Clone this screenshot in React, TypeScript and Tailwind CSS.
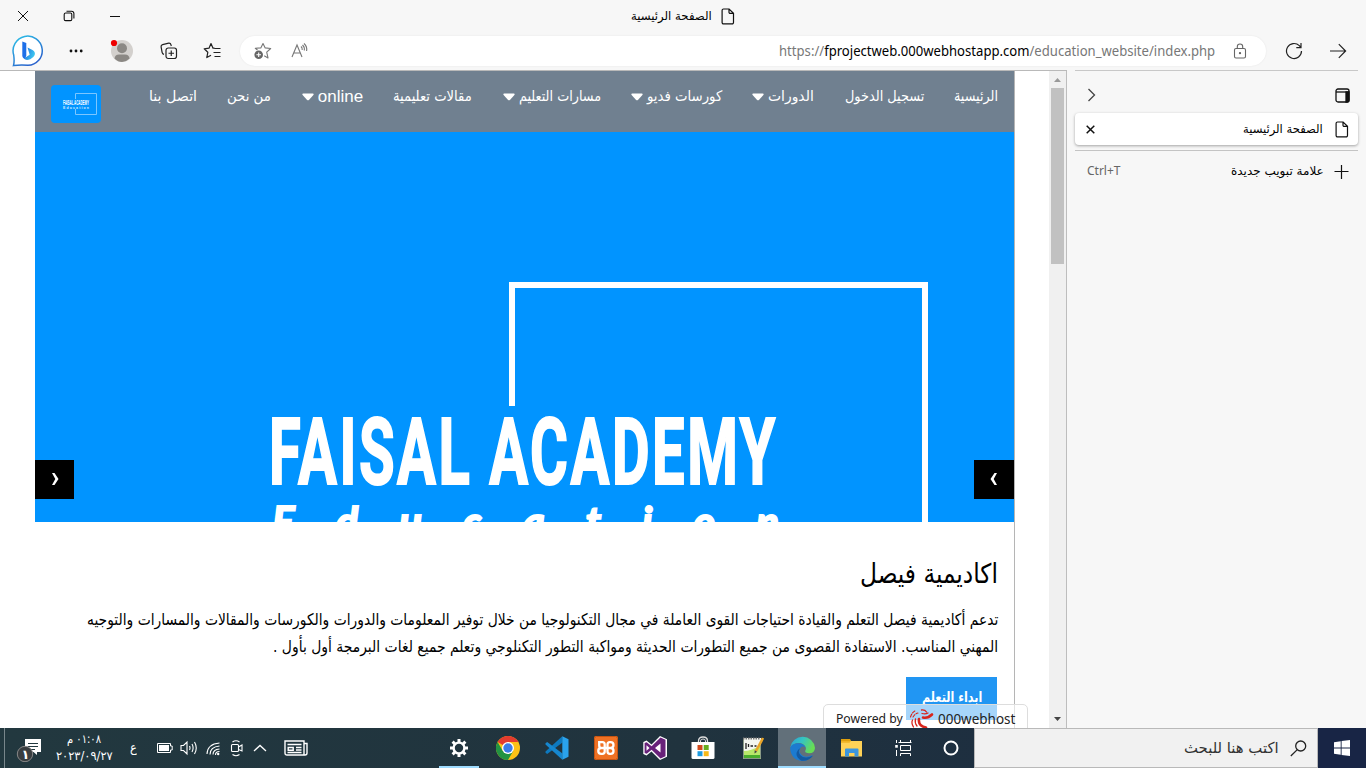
import { useLayoutEffect, useRef, useState } from 'react';
import type { ReactNode } from 'react';

/* Single line of text condensed or stretched to an exact width. */
function Fit({ w, dir = 'rtl', className = '', children }: { w: number; dir?: 'rtl' | 'ltr'; className?: string; children: ReactNode }) {
  const ref = useRef<HTMLSpanElement>(null);
  const [scale, setScale] = useState(1);
  useLayoutEffect(() => {
    if (ref.current && ref.current.offsetWidth) setScale(w / ref.current.offsetWidth);
  }, [w]);
  return (
    <span dir="ltr" className={`flex shrink-0 ${className}`} style={{ width: w }}>
      <span ref={ref} dir={dir} className="block shrink-0 origin-left whitespace-nowrap" style={{ transform: `scaleX(${scale})` }}>
        {children}
      </span>
    </span>
  );
}

const DocIcon = () => (
  <svg width="14" height="17" viewBox="0 0 14 17" fill="none" stroke="#111" strokeWidth="1.2">
    <path d="M2.500 1h5.600L12.500 5.300V14.500a1.400 1.400 0 0 1-1.400 1.400H2.500A1.400 1.400 0 0 1 1.100 14.500V2.400A1.400 1.400 0 0 1 2.500 1ZM8 1v3.200a1.200 1.200 0 0 0 1.200 1.200H12.500" />
  </svg>
);

function TitleBar() {
  return (
    <div className="flex h-8 shrink-0 items-center">
      <svg className="ml-[17px] shrink-0" width="12" height="12" viewBox="0 0 12 12" stroke="#111" strokeWidth="1"><path d="M1 1l10 10M11 1L1 11" /></svg>
      <svg className="ml-[34px] shrink-0" width="12" height="12" viewBox="0 0 12 12" fill="none" stroke="#111" strokeWidth="1.1"><rect x="1.2" y="3" width="7.6" height="7.6" rx="1.4" /><path d="M3.5 1.2h5a2.4 2.4 0 0 1 2.4 2.4v5" /></svg>
      <svg className="ml-[34px] shrink-0" width="12" height="12" viewBox="0 0 12 12" stroke="#111" strokeWidth="1"><path d="M1 6.5h10" /></svg>
      <Fit w={81} className="ml-[510px] text-[12px] text-black">الصفحة الرئيسية</Fit>
      <div className="ml-[9px]"><DocIcon /></div>
    </div>
  );
}

function Toolbar() {
  return (
    <div className="flex h-[38px] shrink-0 items-center">
      <svg className="ml-3 shrink-0" width="32" height="32" viewBox="0 0 32 32">
        <defs>
          <linearGradient id="ring" x1="0" y1="0" x2="0.6" y2="1"><stop offset="0" stopColor="#2bc3e8" /><stop offset="1" stopColor="#2a62cc" /></linearGradient>
          <linearGradient id="bing" x1="0" y1="0" x2="1" y2="0.4"><stop offset="0" stopColor="#1b63dd" /><stop offset="1" stopColor="#3cc5ef" /></linearGradient>
        </defs>
        <path d="M1.500 30.500Q2.600 27 1.700 20A14.600 14.600 0 1 1 16 30.300Q9 29.500 1.500 30.500Z" fill="#fff" stroke="url(#ring)" strokeWidth="1.500" />
        <path d="M10.300 6.500l4 1.400v12.400l-1 3.500q-3-.8-3-3.400Z" fill="#1d6fe8" />
        <path d="M15.500 12.500l5 2.400q3.200 1.800 2.200 5.200-.8 2.400-4.400 4.100-4.200 1.900-6.600-.6l6-3.800Z" fill="url(#bing)" />
      </svg>
      <svg className="ml-6 shrink-0" width="16" height="16" viewBox="0 0 16 16" fill="#111"><circle cx="3" cy="8" r="1.4" /><circle cx="8" cy="8" r="1.4" /><circle cx="13.2" cy="8" r="1.4" /></svg>
      <svg className="ml-[26px] shrink-0" width="24" height="24" viewBox="0 0 24 24">
        <circle cx="12" cy="12" r="11" fill="#d3d0cd" />
        <circle cx="12" cy="9.2" r="5" fill="#8b8884" />
        <path d="M4.500 19.500Q5 15.400 9 15.400h6q4 0 4.600 4.100Q16 23 12 23T4.500 19.500Z" fill="#8b8884" />
        <circle cx="4" cy="4" r="3.100" fill="#e00" />
      </svg>
      <svg className="ml-[26px] shrink-0" width="18" height="18" viewBox="0 0 18 18" fill="none" stroke="#222" strokeWidth="1.2">
        <rect x="6" y="6" width="10.500" height="10.500" rx="2.200" /><path d="M11.250 8.500v5.500M8.500 11.250H14M4 12.300Q2.500 12 2.100 10.300L1.100 4.800Q.9 3 2.600 2.600L8.700 1.200Q10.600 1 11 2.800L11.300 4" />
      </svg>
      <svg className="ml-[25px] shrink-0" width="19" height="18" viewBox="0 0 19 18" fill="none" stroke="#222" strokeWidth="1.200" strokeLinejoin="round">
        <path d="M11.500 6.200H10L8 1.500 6 6.200 1.200 6.800l3.600 3.500-1 5.300L8 13.200M11.500 6.500h6M10.500 10.500h7M11.500 14.500h6" />
      </svg>
      <div className="ml-[18px] flex h-[30px] w-[1026px] shrink-0 items-center rounded-full bg-white shadow-[0_0_2px_rgba(0,0,0,0.08)]">
        <svg className="ml-[14px] shrink-0" width="18" height="18" viewBox="0 0 18 18" fill="none" stroke="#777" strokeWidth="1.100" strokeLinejoin="round">
          <path d="M3.500 8L1.300 6.300 6.800 5.900 9 1.500l2.200 4.400 5.500.6-4 3.600 1.300 5.800-3.800-2.100" /><circle cx="4.700" cy="12.800" r="4.300" fill="#666" stroke="none" /><path d="M4.700 10.500v4.600M2.400 12.800H7" stroke="#fff" />
        </svg>
        <svg className="ml-[19px] shrink-0" width="18" height="18" viewBox="0 0 18 18" fill="none" stroke="#777" strokeWidth="1.100">
          <path d="M1 15L6 3l5 12M2.800 11h6.600M10 4.500q1.500 1.300 1.200 3.500M11.500 3q2.300 2 1.800 5.500M13 1.500q3.400 3 2.600 7.500" />
        </svg>
        <div className="ml-[470px] font-['Noto_Sans'] text-[14px] leading-5 text-[#777]">
          <Fit w={436} dir="ltr">https://<span className="text-black">fprojectweb.000webhostapp.com</span>/education_website/index.php</Fit>
        </div>
        <svg className="ml-[18px] shrink-0" width="14" height="17" viewBox="0 0 14 17" fill="none" stroke="#666" strokeWidth="1.100"><rect x="1.500" y="5.500" width="11" height="9.500" rx="1.500" /><path d="M4.300 5.500V3.700a2.700 2.700 0 0 1 5.400 0v1.800" /><circle cx="7" cy="10.200" r=".6" fill="#444" /></svg>
      </div>
      <svg className="ml-[19px] shrink-0" width="18" height="18" viewBox="0 0 18 18" fill="none" stroke="#222" strokeWidth="1.200"><path d="M16.500 9A7.500 7.500 0 1 1 14.300 3.700L16 5.500M16 1v4.700h-4.700" /></svg>
      <svg className="ml-[26px] shrink-0" width="18" height="16" viewBox="0 0 18 16" fill="none" stroke="#222" strokeWidth="1.200"><path d="M1 8h15.500M9.800 1.200L16.600 8l-6.800 6.800" /></svg>
    </div>
  );
}

const Caret = () => <svg className="shrink-0" width="12" height="8" viewBox="0 0 12 8" fill="#fff"><path d="M1.200.500h9.600q1.400.2.600 1.400L6.900 7q-.9.700-1.800 0L.6 1.900Q-.2.700 1.200.500Z" /></svg>;

const links: { text: string; w: number; caret?: boolean; latin?: boolean }[] = [
  { text: 'اتصل بنا', w: 48 },
  { text: 'من نحن', w: 44 },
  { text: 'online', w: 45, caret: true, latin: true },
  { text: 'مقالات تعليمية', w: 79 },
  { text: 'مسارات التعليم', w: 82, caret: true },
  { text: 'كورسات فديو', w: 75, caret: true },
  { text: 'الدورات', w: 46, caret: true },
  { text: 'تسجيل الدخول', w: 79 },
  { text: 'الرئيسية', w: 44 },
];

function SiteNav() {
  return (
    <nav className="flex h-[61px] shrink-0 bg-[#708090] pl-4 pr-4 text-white">
      <div className="mt-[14px] flex h-[38px] w-[50px] items-center justify-center rounded bg-[#0194ff]">
        <svg width="50" height="38" viewBox="0 0 50 38">
          <path d="M24.500 14V8.500H45.500V29.500H24.500V24" fill="none" stroke="#7cc6ff" />
          <text x="12" y="19.500" fontFamily="Liberation Sans" fontSize="6.500" fontWeight="700" fill="#fff" textLength="26" lengthAdjust="spacingAndGlyphs">FAISAL ACADEMY</text>
          <text x="12" y="23.500" fontFamily="Liberation Sans" fontSize="3.500" fontWeight="700" fill="#d8eeff" textLength="26">Education</text>
        </svg>
      </div>
      <div className="ml-12 mt-[14px] flex h-6 flex-1 items-center justify-between">
        {links.map((l) => (
          <div key={l.text} className="flex items-center gap-1">
            {l.caret && <Caret />}
            <Fit w={l.w} dir={l.latin ? 'ltr' : 'rtl'} className={l.latin ? "font-['Liberation_Sans'] text-[17px]" : 'text-[14.5px]'}>{l.text}</Fit>
          </div>
        ))}
      </div>
    </nav>
  );
}

function Hero() {
  return (
    <section className="relative h-[390px] shrink-0 overflow-hidden bg-[#0194ff] text-white">
      <svg className="absolute left-[473px] top-[149px]" width="422" height="242" viewBox="0 0 422 242" fill="none" stroke="#fff" strokeWidth="6"><path d="M4 125V4H417V242" /></svg>
      <div className="absolute left-[234px] top-[283px] font-['Roboto'] text-[92px] font-bold leading-[76px] tracking-[4px] [-webkit-text-stroke:2px_white]">
        <Fit w={509} dir="ltr">FAISAL ACADEMY</Fit>
      </div>
      <div className="absolute left-[237px] top-[365px] flex w-[507px] justify-between font-['Lato'] text-[42px] font-bold italic leading-[48px] [-webkit-text-stroke:2px_white] [paint-order:stroke] [stroke-linejoin:round]">
        {'Education'.split('').map((c, i) => <span key={i}>{c}</span>)}
      </div>
      <button className="absolute left-0 top-[328px] flex h-[39px] w-[39px] items-center justify-center bg-black">
        <svg className="mb-[2px]" width="8" height="12" viewBox="0 0 8 12" fill="#fff"><path d="M1 0H3.500L7.500 6 3.500 12H1L4.300 6Z" /></svg>
      </button>
      <button className="absolute right-0 top-[328px] flex h-[39px] w-10 items-center justify-center bg-black">
        <svg className="mb-[2px]" width="8" height="12" viewBox="0 0 8 12" fill="#fff"><path d="M7 0H4.500L.5 6l4 6H7L3.700 6Z" /></svg>
      </button>
    </section>
  );
}

function HostBadge() {
  return (
    <div className="absolute left-[823px] top-[633px] flex h-[30px] w-[205px] items-start rounded-t-[5px] border border-[#ddd] bg-white/60 pl-3 pt-1 font-['Noto_Sans'] leading-5 text-[#222]">
      <Fit w={67} dir="ltr" className="text-[12px]">Powered by</Fit>
      <svg className="ml-[6px] shrink-0" width="25" height="20" viewBox="0 0 25 20" fill="none" stroke="#d8251c" strokeLinecap="round">
        <path d="M10 10Q9 17 17 18.500" strokeWidth="2.600" /><path d="M3.500 11Q2 14 4.500 18M6.500 10Q5.500 14 8 17" strokeWidth="1.300" /><path d="M1.500 8Q3 3 7 1.500M4 8Q6 4.500 9 4" strokeWidth="1.100" strokeDasharray="3 1.500" /><path d="M14 8.500Q19 9.500 23 5.500" strokeWidth="2.600" /><path d="M12.500 1Q16 .6 17.500 3M13 4.500q3.500 1 6-.5" strokeWidth="1.300" />
      </svg>
      <Fit w={77} dir="ltr" className="ml-[4px] text-[14px]">000webhost</Fit>
    </div>
  );
}

function WebPage() {
  return (
    <div className="relative flex w-[1067px] shrink-0 overflow-hidden border-r border-[#bdbdbd] bg-white">
      <main className="ml-[35px] flex w-[980px] shrink-0 flex-col border-r border-[#b5b5b5]">
        <SiteNav />
        <Hero />
        <section className="flex flex-col items-end pr-4 text-black">
          <Fit w={138} className="mt-8 text-[27px] leading-[40px]">اكاديمية فيصل</Fit>
          <Fit w={911} className="mt-[12px] text-[16px] leading-[27px]">تدعم أكاديمية فيصل التعلم والقيادة احتياجات القوى العاملة في مجال التكنولوجيا من خلال توفير المعلومات والدورات والكورسات والمقالات والمسارات والتوجيه</Fit>
          <Fit w={725} className="text-[16px] leading-[27px]">المهني المناسب. الاستفادة القصوى من جميع التطورات الحديثة ومواكبة التطور التكنلوجي وتعلم جميع لغات البرمجة أول بأول .</Fit>
          <button className="mr-px mt-[17px] flex h-[43px] w-[91px] justify-center bg-[#2196f3] pt-2 text-white">
            <Fit w={60} className="text-[14px] font-bold leading-6">ابداء التعلم</Fit>
          </button>
        </section>
      </main>
      <div className="ml-[34px] flex w-[17px] shrink-0 flex-col items-center bg-[#f0f0f0]">
        <svg className="shrink-0" width="17" height="17" viewBox="0 0 17 17"><path d="M5 11l3.500-4L12 11Z" fill="#999" /></svg>
        <div className="h-[176px] w-[13px] bg-[#c1c1c1]" />
        <svg className="mt-auto shrink-0" width="17" height="17" viewBox="0 0 17 17"><path d="M5 6l3.500 4L12 6Z" fill="#444" /></svg>
      </div>
      <HostBadge />
    </div>
  );
}

function TabPanel() {
  return (
    <aside className="flex flex-1 flex-col pl-2 pr-2">
      <div className="flex h-[42px] items-center justify-between pl-3 pr-2 pt-[6px]">
        <svg width="9" height="14" viewBox="0 0 9 14" fill="none" stroke="#444" strokeWidth="1.300"><path d="M1.500 1l6 6-6 6" /></svg>
        <svg width="15" height="15" viewBox="0 0 15 15" fill="none" stroke="#111" strokeWidth="1.300"><rect x="1" y="1" width="13" height="13" rx="2" /><path d="M1 4h13" /><path d="M11 4H14v8q0 2-2 2h-1Z" fill="#111" /></svg>
      </div>
      <div className="flex h-8 items-center rounded bg-white pl-[11px] shadow-[0_1px_3px_rgba(0,0,0,0.35)]">
        <svg width="9" height="9" viewBox="0 0 9 9" stroke="#111" strokeWidth="1.500"><path d="M.700.700l7.600 7.600M8.300.700L.700 8.300" /></svg>
        <Fit w={80} className="ml-auto text-[12px]">الصفحة الرئيسية</Fit>
        <div className="ml-[12px] mr-[9px]"><DocIcon /></div>
      </div>
      <div className="mt-[5px] h-px bg-[#c4c4c4]" />
      <div className="flex h-[40px] items-center pl-3">
        <Fit w={34} dir="ltr" className="font-['Noto_Sans'] text-[12px] text-[#666]">Ctrl+T</Fit>
        <Fit w={93} className="ml-auto text-[12px]">علامة تبويب جديدة</Fit>
        <svg className="ml-[10px] mr-[9px]" width="15" height="15" viewBox="0 0 15 15" stroke="#111" strokeWidth="1.200"><path d="M7.500 1v14M.500 7.500h14" /></svg>
      </div>
    </aside>
  );
}

const Gear = () => (
  <svg width="20" height="20" viewBox="0 0 20 20" fill="none" stroke="#fff">
    <circle cx="10" cy="10" r="5.400" strokeWidth="2.400" />
    <path d="M10 1v3.500M10 15.500V19M1 10h3.500M15.500 10H19M3.600 3.600l2.600 2.600M13.800 13.800l2.600 2.600M16.400 3.600l-2.600 2.600M6.200 13.800l-2.600 2.600" strokeWidth="3" />
  </svg>
);
const Chrome = () => (
  <svg width="24" height="24" viewBox="0 0 24 24">
    <circle cx="12" cy="12" r="12" fill="#fbc116" />
    <path d="M1.600 6A12 12 0 0 1 22.400 6H12v6Z" fill="#e33b2e" />
    <path d="M1.600 6A12 12 0 0 0 12 24l5.200-9H6.800Z" fill="#229342" />
    <circle cx="12" cy="12" r="6" fill="#fff" /><circle cx="12" cy="12" r="4.700" fill="#3a7ce8" />
  </svg>
);
const VsCode = () => (
  <svg width="24" height="24" viewBox="0 0 24 24">
    <path d="M17.500 6.500L2.200 18 .500 16.800v-1.300L17.300.3Z" fill="#0d79bf" />
    <path d="M17.500 17.500L2.200 6 .500 7.200v1.300L17.300 23.700Z" fill="#1687cf" />
    <path d="M17.300.3L23.500 3.200v17.600l-6.200 2.900Z" fill="#2aa3ed" />
  </svg>
);
const Xampp = () => (
  <svg width="24" height="24" viewBox="0 0 24 24">
    <rect width="24" height="24" rx="2" fill="#ef7124" /><rect x=".5" y=".5" width="23" height="23" rx="2" fill="none" stroke="#c75411" />
    <path d="M17 12H7.200A2.900 2.900 0 0 0 7.200 17.800H8.400Q10.700 17.800 10.700 15.500V8.600Q10.700 6.200 8.400 6.200H5.200V9.200Q5.200 12 7.200 12M13.500 15.500V8.600Q13.500 6.200 15.800 6.200H16.600A2.900 2.900 0 0 1 16.600 12 2.900 2.900 0 0 1 16.600 17.800H15.800Q13.500 17.800 13.500 15.500" fill="none" stroke="#fff" strokeWidth="2.300" />
  </svg>
);
const VisualStudio = () => (
  <svg width="24" height="24" viewBox="0 0 24 24">
    <path d="M17 0l7 3.200v17.600L17 24 8.500 15.500 3.500 19.500.3 18V6l3.200-1.500 5 4Z" fill="#fff" />
    <path d="M17.500 1.500l5 2.300v16.400l-5 2.300L8.600 13.700 3.700 17.700 1.600 16.900V7.100l2.100-.8 4.900 4ZM17.500 7.500L12 12l5.500 4.500ZM3.500 9.300v5.400L6.500 12Z" fill="#68217a" fillRule="evenodd" />
  </svg>
);
const Store = () => (
  <svg width="24" height="24" viewBox="0 0 24 24">
    <path d="M7.500 8V5q0-4 4.500-4t4.500 4v3" fill="none" stroke="#ddd" strokeWidth="1.300" /><path d="M9.500 6V5q0-2 2.500-2t2.500 2v1" fill="none" stroke="#ddd" />
    <path d="M.5 6h23v15.500q0 1.500-1.500 1.500H2q-1.500 0-1.500-1.500Z" fill="#fff" />
    <path d="M6.500 9H11.500v5h-5Z" fill="#d14a1d" /><path d="M12.700 9h5v5h-5Z" fill="#68ae20" /><path d="M6.500 15.200h5v5h-5Z" fill="#1c9be0" /><path d="M12.700 15.200h5v5h-5Z" fill="#f6b91a" />
  </svg>
);
const Notepad = () => (
  <svg width="24" height="24" viewBox="0 0 24 24">
    <path d="M2 2h18v21H2Z" fill="#f4f6f0" /><path d="M2 15q9 0 18-6v14H2Z" fill="#b9e86a" /><path d="M3 19h16v3H3Z" fill="#4aae2c" /><path d="M2.500 2v20.500h17V9" fill="none" stroke="#8a9a86" />
    <path d="M2 2.500h17" stroke="#777" strokeDasharray="1.500 1" strokeWidth="2" /><path d="M5 7v6M7.500 8v3M9.500 10h2.500M13.500 10h2" stroke="#222" strokeWidth="1.300" />
    <path d="M22 2L15 15" stroke="#e9a52a" strokeWidth="2.600" /><path d="M13.500 17.500l.2-3.200 2.400 1.400Z" fill="#444" />
  </svg>
);
const Edge = () => (
  <svg width="25" height="25" viewBox="0 0 24 24">
    <defs><linearGradient id="eg" x1="0" y1="0" x2="1" y2=".4"><stop offset="0" stopColor="#2a9fd8" /><stop offset=".5" stopColor="#35c4c2" /><stop offset="1" stopColor="#67dd55" /></linearGradient></defs>
    <path d="M.2 11A12 12 0 0 1 24 11.500q-.3 5-5.600 5-4.200 0-3.800-2Q16 13 15 10.500 12 5.500 6 7 2 8 .2 11Z" fill="url(#eg)" />
    <path d="M.1 11.500Q1.500 7.500 7 7q6-.2 8 4-3-2-5 .500-1.800 3 .500 6 4 4.500 11.500.800-4 6-10.500 5.700Q1 23 .1 11.500Z" fill="#1c7bd0" />
    <path d="M9.800 11.700Q7 15 10 18.500q4 4 12 .5-4 5.500-11 4.800Q5 20 6.500 15.500 7.500 12.500 9.800 11.700Z" fill="#155aa0" />
  </svg>
);
const Folder = () => (
  <svg width="24" height="24" viewBox="0 0 24 24">
    <path d="M1 3h9l1.500 2.500H1Z" fill="#df9f0d" /><path d="M1 5h21v15.500H1Z" fill="#ffd257" /><path d="M1 5h10l-1.500 1.800H1Z" fill="#efb325" />
    <path d="M5 20.500v-7q0-1 1-1h11.500q1 0 1 1v7h-4V17H9v3.500Z" fill="#3c96de" />
  </svg>
);
const TaskView = () => (
  <svg width="18" height="18" viewBox="0 0 18 18" fill="none" stroke="#fff" strokeWidth="1"><path d="M2.500 1v3M2.500 11v6M6.500 1v2.500h10V1M6.500 17v-2.500h10V17M6.500 6.500h10v5h-10ZM4.500 3.500h13" /><path d="M1.200 6h2.600v2.700H1.200Z" fill="#fff" stroke="none" /></svg>
);

function Taskbar() {
  const apps: [ReactNode, string][] = [
    [<Gear />, 'w-[49px]'], [<Chrome />, 'w-[49px]'], [<VsCode />, 'w-[49px]'], [<Xampp />, 'w-[49px]'], [<VisualStudio />, 'w-[49px]'],
    [<Store />, 'w-[48px]'], [<Notepad />, 'w-[51px]'], [<Edge />, 'w-[48px] bg-[#62707a]'], [<Folder />, 'w-[51px]'], [<TaskView />, 'w-[52px]'],
    [<svg width="18" height="18" viewBox="0 0 18 18"><circle cx="9" cy="9" r="6.500" fill="none" stroke="#fff" strokeWidth="2" /></svg>, 'w-[44px]'],
  ];
  return (
    <footer className="flex h-10 shrink-0 items-center bg-linear-to-r from-[#22383f] via-[#20333e] to-[#1b2942] text-white">
      <div className="ml-1 h-10 w-px shrink-0 bg-[#78868b]" />
      <svg className="ml-[11px] shrink-0" width="27" height="28" viewBox="0 0 27 28">
        <path d="M9 5h16v13h-4v3l-3.500-3H9Z" fill="#fff" /><path d="M12 9.500h10M12 12.500h10M14 15.500h5" stroke="#22383f" />
        <circle cx="9" cy="20" r="7.700" fill="#383d40" stroke="#888" /><text x="5.500" y="25" fill="#fff" fontFamily="DejaVu Sans" fontWeight="700" fontSize="13">١</text>
      </svg>
      <div className="ml-[12px] flex w-[58px] shrink-0 flex-col items-center text-[12px] leading-[17px]">
        <Fit w={34}>٠١:٠٨ م</Fit>
        <Fit w={57} dir="ltr">٢٠٢٣/٠٩/٢٧</Fit>
      </div>
      <Fit w={7} className="ml-[17px] text-[13px]">ع</Fit>
      <svg className="ml-[20px] shrink-0" width="16" height="10" viewBox="0 0 16 10"><path d="M.500.500h13v2.500h1.700v4h-1.700v2.500H.500Z" fill="none" stroke="#fff" /><path d="M2 2h10v6h-10Z" fill="#fff" /></svg>
      <svg className="ml-[7px] shrink-0" width="18" height="16" viewBox="0 0 18 16" fill="none" stroke="#fff" strokeWidth="1.100"><path d="M1 5.500h2.500L7 2v12l-3.500-3.500H1ZM9.500 6q1 2 0 4M12 4q2.200 4 0 8M14.500 2q3.500 6 0 12" /></svg>
      <svg className="ml-[8px] shrink-0" width="15" height="15" viewBox="0 0 15 15" fill="none" stroke="#fff" strokeWidth="1.100"><path d="M1 13Q1.500 3 13.500 2M4 13.500Q4 6 13.500 5M7 13.500Q7 8.500 13.500 8" /><path d="M9.500 14q0-3.500 4-3.500" /><circle cx="12.200" cy="13" r="1.200" fill="#fff" stroke="none" /></svg>
      <svg className="ml-[9px] shrink-0" width="13" height="18" viewBox="0 0 13 18" fill="none" stroke="#fff" strokeWidth="1.100"><rect x="1.500" y="5.500" width="7" height="7" rx="1" /><path d="M8.500 8L12 6v6L8.500 10.500M2.500 3Q6 .5 9.500 3M2.500 15.500q3.500 2.500 7 0" /></svg>
      <svg className="ml-[10px] shrink-0" width="14" height="8" viewBox="0 0 14 8" fill="none" stroke="#fff" strokeWidth="1.300"><path d="M1 7l6-5.500L13 7" /></svg>
      <svg className="ml-[17px] shrink-0" width="24" height="16" viewBox="0 0 24 16" fill="none" stroke="#fff" strokeWidth="1.400"><path d="M1 1h19v14H3q-2 0-2-2ZM20 3.500h3V13q0 2-2 2h-1M3.500 4.500h14M12 7.500h5.500M12 10h5.500M3.500 12.500h14" /><path d="M4.200 7.500h5v2.800h-5Z" /></svg>
      <div className="ml-[126px] flex h-10 shrink-0">
        {apps.map(([icon, cls], i) => (
          <div key={i} className={`relative flex h-10 shrink-0 items-center justify-center ${cls}`}>
            {icon}
            {(i === 0 || i === 7) && <span className={`absolute bottom-0 h-0.5 bg-[#9edcff] ${i === 0 ? 'left-[5px] w-10' : 'left-0 w-12'}`} />}
          </div>
        ))}
      </div>
      <div className="ml-auto flex h-10 w-[344px] shrink-0 items-center justify-end border border-[#b9b9b9] bg-[#f1f1f1] pr-[10px] text-[#333]">
        <Fit w={95} className="text-[15px]">اكتب هنا للبحث</Fit>
        <svg className="ml-[11px]" width="17" height="17" viewBox="0 0 17 17" fill="none" stroke="#222" strokeWidth="1.300"><circle cx="10.700" cy="6" r="5" /><path d="M7.300 9.600L.8 16" /></svg>
      </div>
      <div className="flex h-10 w-12 shrink-0 items-center justify-center bg-[#182545]">
        <svg width="16" height="16" viewBox="0 0 16 16" fill="#fff"><path d="M0 2.200L6.700 1.200V7.500H0ZM7.600 1.100L16 0v7.500H7.600ZM0 8.400h6.700v6.400L0 13.800ZM7.600 8.400H16V16l-8.400-1.100Z" /></svg>
      </div>
    </footer>
  );
}

export default function App() {
  return (
    <div dir="ltr" className="flex h-[768px] w-[1366px] flex-col overflow-hidden bg-[#f7f7f7] font-['DejaVu_Sans',sans-serif]">
      <TitleBar />
      <Toolbar />
      <div className="flex shrink-0 justify-between">
        <div className="h-px w-[1067px] bg-[#b9b9b9]" />
        <div className="mr-2 h-px w-[283px] bg-[#c8c8c8]" />
      </div>
      <div className="flex h-[657px] shrink-0">
        <WebPage />
        <TabPanel />
      </div>
      <Taskbar />
    </div>
  );
}
